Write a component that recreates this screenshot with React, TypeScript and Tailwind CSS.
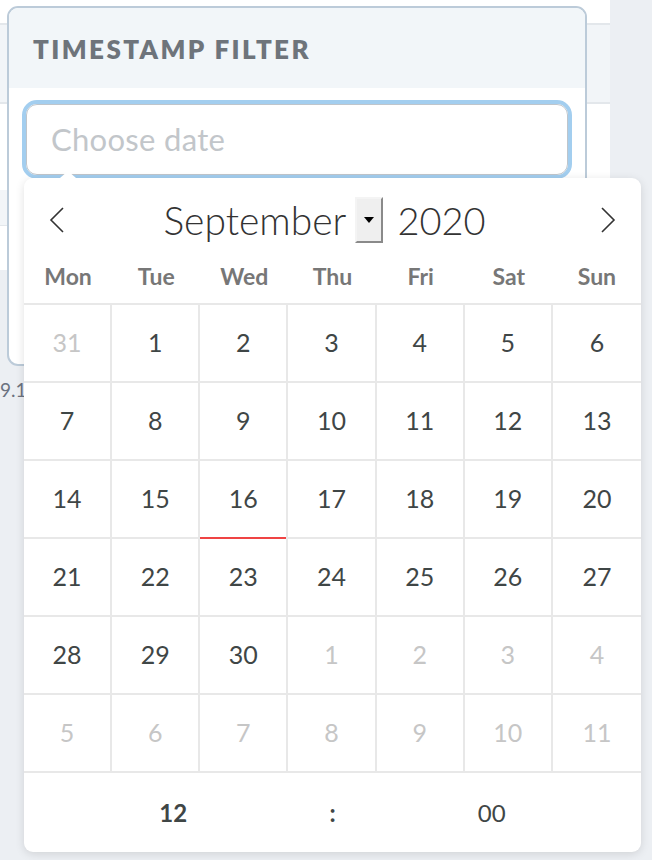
import React from "react";

const WEEKDAYS = ["Mon", "Tue", "Wed", "Thu", "Fri", "Sat", "Sun"];

type Day = { n: number; muted?: boolean; today?: boolean };

const WEEKS: Day[][] = [
  [{ n: 31, muted: true }, { n: 1 }, { n: 2 }, { n: 3 }, { n: 4 }, { n: 5 }, { n: 6 }],
  [{ n: 7 }, { n: 8 }, { n: 9 }, { n: 10 }, { n: 11 }, { n: 12 }, { n: 13 }],
  [{ n: 14 }, { n: 15 }, { n: 16, today: true }, { n: 17 }, { n: 18 }, { n: 19 }, { n: 20 }],
  [{ n: 21 }, { n: 22 }, { n: 23 }, { n: 24 }, { n: 25 }, { n: 26 }, { n: 27 }],
  [{ n: 28 }, { n: 29 }, { n: 30 }, { n: 1, muted: true }, { n: 2, muted: true }, { n: 3, muted: true }, { n: 4, muted: true }],
  [5, 6, 7, 8, 9, 10, 11].map((n) => ({ n, muted: true })),
];

const FONT = { fontFamily: "Lato, 'Open Sans', sans-serif" };

function Chevron({ dir }: { dir: "left" | "right" }) {
  return (
    <svg width="16" height="28" viewBox="0 0 16 28" fill="none" stroke="#333" strokeWidth="1.6">
      {dir === "left" ? <path d="M14 2 L2 14 L14 26" /> : <path d="M2 2 L14 14 L2 26" />}
    </svg>
  );
}

function DatePicker() {
  return (
    <div className="absolute left-[24px] top-[178px] w-[617px] rounded-[9px] bg-white shadow-[0_2px_10px_rgba(0,0,0,0.12)]">
      <div className="absolute -top-[7px] left-[36px] h-0 w-0 border-x-[8px] border-b-[7px] border-x-transparent border-b-white" />
      <div className="flex h-[84px] items-center justify-between px-[25px]">
        <Chevron dir="left" />
        <div className="flex items-center pr-[16px] text-[#333]">
          <span className="text-[39px] font-light leading-none">September</span>
          <span className="ml-[9px] flex h-[46px] w-[28px] items-center justify-center border-[2px] border-t-[#f4f4f4] border-l-[#f4f4f4] border-r-[#8a8a8a] border-b-[#8a8a8a] bg-[#efefef]">
            <span className="h-0 w-0 border-x-[5px] border-t-[6px] border-x-transparent border-t-black" />
          </span>
          <span className="ml-[14px] text-[38px] font-light leading-none">2020</span>
        </div>
        <Chevron dir="right" />
      </div>
      <div className="grid h-[41px] grid-cols-7 items-start">
        {WEEKDAYS.map((d) => (
          <div key={d} className="text-center text-[23px] font-bold leading-[28px] text-[#777]">
            {d}
          </div>
        ))}
      </div>
      <div className="border-t-[2px] border-[#e8e8e8]">
        {WEEKS.map((week, i) => (
          <div key={i} className="grid h-[78px] grid-cols-7 border-b-[2px] border-[#e8e8e8]">
            {week.map((d, j) => (
              <div
                key={j}
                className={`relative flex items-center justify-center text-[25px] ${j < 6 ? "border-r-[2px] border-[#e8e8e8]" : ""} ${d.muted ? "text-[#c6c6c6]" : "text-[#3f4646]"}`}
              >
                {d.n}
                {d.today && <span className="absolute -bottom-[2px] left-0 right-0 h-[2px] bg-[#ef4444]" />}
              </div>
            ))}
          </div>
        ))}
      </div>
      <div className="flex h-[79px] items-center text-[24px] text-[#3f4646]">
        <div className="flex-1 text-center font-bold">12</div>
        <div className="w-[20px] text-center font-bold">:</div>
        <div className="flex-1 text-center">00</div>
      </div>
    </div>
  );
}

export default function App() {
  return (
    <div className="relative h-[860px] w-[652px] overflow-hidden bg-[#eceff3]" style={FONT}>
      <div className="w-[610px] bg-white">
        <div className="h-[23px]" />
        <div className="h-[81px] border-y-[2px] border-[#e3e7eb] bg-[#f2f5f8]" />
        <div className="h-[86px]" />
        <div className="h-[36px] border-b-[1px] border-[#e3e7eb] bg-[#f2f5f8]" />
        <div className="h-[44px] bg-white" />
      </div>
      <div className="absolute left-0 top-[376px] text-[19px] text-[#6b7280]">9.1</div>

      <div className="absolute left-[7px] top-[6px] h-[360px] w-[580px] overflow-hidden rounded-[11px] border-[2px] border-[#bccbd9] bg-white">
        <div className="flex h-[80px] items-center bg-[#f2f6f9] px-[24px] pt-[2px]">
          <span className="text-[26px] font-extrabold uppercase tracking-[2.4px] text-[#6e747b]">Timestamp Filter</span>
        </div>
        <div className="px-[13px] pt-[12px]">
          <div className="h-[79px] rounded-[15px] border-[4px] border-[#a3ceef] p-0">
            <div className="flex h-full items-center rounded-[11px] border border-[#bfc5cb] px-[24px] text-[31px] tracking-[0.3px] text-[#c2c6ca]">
              Choose date
            </div>
          </div>
        </div>
      </div>

      <DatePicker />
    </div>
  );
}
